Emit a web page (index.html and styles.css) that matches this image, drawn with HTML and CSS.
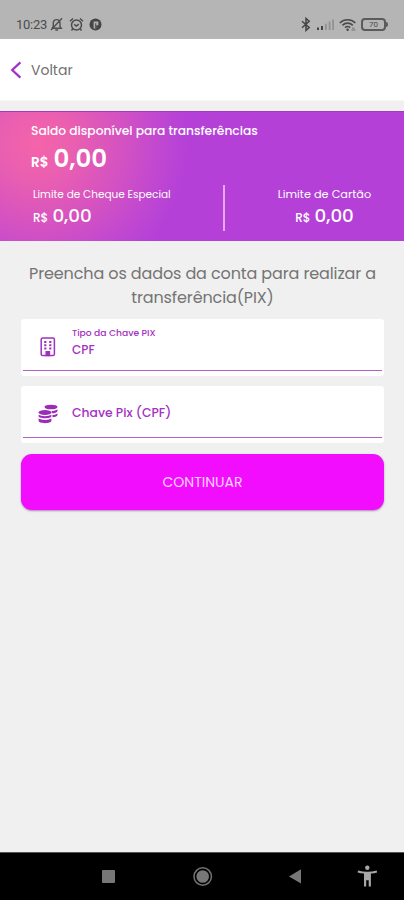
FILE: index.html
```html
<!DOCTYPE html>
<html lang="pt-BR">
<head>
<meta charset="utf-8">
<title>Transferência PIX</title>
<link rel="stylesheet" href="styles.css">
</head>
<body>
<div class="screen">
  <div class="status">
    <span class="clock">10:23</span>
    <svg class="s-icon bell" width="13" height="15" viewBox="0 0 13 15" fill="none" stroke="#505050" stroke-width="1.4"><path d="M2 11.2h9.2L10 9.5V6.2C10 4 8.7 2.6 6.6 2.6S3.3 4 3.3 6.2v3.3L2 11.2M5.3 13h2.8M12 1.2L1 13"/></svg>
    <svg class="s-icon alarm" width="15" height="15" viewBox="0 0 15 15" fill="none" stroke="#4c4c4c" stroke-width="1.5"><circle cx="7.5" cy="8" r="5"/><path d="M1 4.2L4 1.5M14 4.2L11 1.5M3.8 11.8L2.5 13.5M11.2 11.8l1.3 1.7M5.2 7.3l2.2 1.7 2.4-1.8"/></svg>
    <svg class="s-icon app" width="13" height="13" viewBox="0 0 13 13"><circle cx="6.5" cy="6.5" r="6" fill="#444"/><path d="M4.6 3.6h4.8v3.6H7.2v3.2H4.6z" fill="#b0b0b0"/><path d="M6.1 5.3h1.1v5.1H6.1z" fill="#555"/></svg>
    <span class="spacer"></span>
    <svg class="s-icon bt" width="10" height="15" viewBox="0 0 10 15" fill="none" stroke="#444" stroke-width="1.5"><path d="M1 4.2l7.2 6.3L5 13.4V1.5l3.2 2.8L1 10.7"/></svg>
    <svg class="s-icon signal" width="19" height="13" viewBox="0 0 19 13"><path d="M1 9.6h2V12H1zM5 8h2v4H5z" fill="#444"/><path d="M9 5.8h1.8V12H9zM12.7 3.6h1.8V12h-1.8zM16.2 1.5H18V12h-1.8z" fill="#929292"/></svg>
    <svg class="s-icon wifi" width="18" height="14" viewBox="0 0 18 14" fill="none" stroke="#4b4b4b" stroke-width="1.6"><path d="M.8 4.9C5.2.7 12 .7 16.4 4.9M3.4 7.3c3-2.9 7.4-2.9 10.4 0M6 9.6c1.6-1.4 3.6-1.4 5.2 0"/><circle cx="8.6" cy="11.8" r="1.2" fill="#444" stroke="none"/><path d="M12.5 12h4M13 10.2h2.5" stroke="#777" stroke-width="1"/></svg>
    <span class="battery">70</span>
  </div>
  <header class="topbar">
    <svg width="12" height="18" viewBox="0 0 12 18" fill="none" stroke="#a32fc6" stroke-width="2.2"><path d="M10.4 1.4L2.2 9l8.2 7.6"/></svg>
    <span class="back">Voltar</span>
  </header>
  <section class="balance">
    <div class="balance-label">Saldo disponível para transferências</div>
    <div class="money main"><small>R$</small><span>0,00</span></div>
    <div class="limits">
      <div class="limit check">
        <div class="limit-label">Limite de Cheque Especial</div>
        <div class="money"><small>R$</small><span>0,00</span></div>
      </div>
      <div class="limit card">
        <div class="limit-label">Limite de Cartão</div>
        <div class="money"><small>R$</small><span>0,00</span></div>
      </div>
    </div>
  </section>
  <main>
    <h1>Preencha os dados da conta para realizar a<br>transferência(PIX)</h1>
    <div class="field type">
      <svg class="f-icon" width="16" height="20" viewBox="0 0 16 20" fill="none" stroke="#a030bd" stroke-width="1.5"><rect x="1.2" y="1" width="13.2" height="17.6" rx="1.4"/><path d="M4.2 5h2.2M9.2 5h2.2M4.2 8.2h2.2M9.2 8.2h2.2M4.2 11.4h2.2M9.2 11.4h2.2" stroke-width="2"/><path d="M6.2 18.5v-3.7h3.2v3.7z" fill="#a030bd"/></svg>
      <div class="f-text"><span class="f-label">Tipo da Chave PIX</span><span class="f-value">CPF</span></div>
    </div>
    <div class="field key">
      <svg class="f-icon coins" width="20" height="20" viewBox="0 0 20 20" fill="#9b2cb8"><ellipse cx="13" cy="3" rx="6.5" ry="2.3"/><path d="M13.5 7.1c2.6 0 4.7-.7 6-1.8v1.8c0 1.2-2 2.1-5 2.3zM14.5 11c2.2-.1 4-.7 5-1.6v1.5c0 1.2-2 2.1-5 2.3z"/><ellipse cx="7" cy="8.5" rx="6.4" ry="2.4"/><path d="M.6 10.7c2.9 1.9 9.9 1.9 12.8 0v1.6c0 2.6-12.8 2.6-12.8 0zM.6 14.5c2.9 1.9 9.9 1.9 12.8 0v2.3c0 3.2-12.8 3.2-12.8 0z"/></svg>
      <span class="f-placeholder">Chave Pix (CPF)</span>
    </div>
    <button class="continue" type="button">CONTINUAR</button>
  </main>
  <nav class="navbar">
    <svg width="404" height="48" viewBox="0 0 404 48"><rect x="102" y="18" width="13" height="13" rx="1" fill="#777"/><circle cx="202.7" cy="24.5" r="8.7" fill="none" stroke="#737373" stroke-width="1.5"/><circle cx="202.7" cy="24.5" r="6.3" fill="#777"/><path d="M289 24.4L301 17.3v14.2z" fill="#777"/><g fill="#a8a8a8"><circle cx="367.3" cy="15.8" r="2.2"/><path d="M358 18.6c6 1.6 12.6 1.6 18.7 0l.4 1.8c-2 .6-4 1-6.2 1.2v13h-2.2v-6.4h-2.5v6.4H364v-13c-2.2-.2-4.3-.6-6.4-1.2z"/></g></svg>
  </nav>
</div>
</body>
</html>
```
FILE: styles.css
```css
* { box-sizing: border-box; }
body {
  margin: 0;
  background: #f0f0f0;
  font-family: Poppins, Inter, "Open Sans", sans-serif;
}
.screen { width: 404px; height: 900px; display: flex; flex-direction: column; overflow: hidden; }
.status {
  flex: none;
  height: 39px;
  padding: 10px 18px 0 16px;
  display: flex;
  align-items: center;
  background: #b5b5b5;
  color: #4c4c4c;
}
.clock { font: 13px/16px Roboto, sans-serif; letter-spacing: -.25px; width: 34px; white-space: nowrap; }
.s-icon { flex: none; }
.alarm { margin-left: 6px; }
.app { margin-left: 5px; }
.spacer { flex: 1; }
.signal { margin-left: 5px; }
.wifi { margin-left: 4px; }
.battery {
  position: relative;
  margin-left: 4px;
  width: 25px;
  height: 13px;
  border: 2px solid #5b5b5b;
  border-radius: 4px;
  font: 8px/9px Roboto, sans-serif;
  text-align: center;
}
.battery::after {
  content: "";
  position: absolute;
  right: -4px;
  top: 2px;
  width: 2px;
  height: 5px;
  border-radius: 0 2px 2px 0;
  background: #5b5b5b;
}
.topbar {
  flex: none;
  height: 62px;
  padding-left: 10px;
  display: flex;
  align-items: center;
  gap: 9px;
  background: #fff;
  border-bottom: 1px solid #f7f7f7;
}
.back { margin-top: 1px; font-size: 14px; color: #707070; }
.balance {
  flex: none;
  height: 130px;
  margin-top: 10px;
  padding: 11px 0 0 31px;
  color: #fff;
  background: radial-gradient(circle at 38px 32px, #f564aa 0, #ea5fb0 35px, #d653c0 80px, #c148d0 120px, #b440d8 150px);
  border-top: 1px solid #a43ac4;
}
.balance-label { font-size: 12.25px; line-height: 16px; font-weight: 500; white-space: nowrap; }
.money { display: flex; align-items: baseline; }
.money small { font-size: 12px; font-weight: 500; }
.money span { font-size: 18.3px; font-weight: 500; }
.main { margin-top: 5px; height: 30px; line-height: 30px; gap: 5px; }
.money.main small { font-size: 13.5px; font-weight: 600; }
.money.main span { font-size: 24.5px; font-weight: 600; }
.limits { margin-top: 11px; display: flex; height: 46px; }
.limit-label { margin-top: 1px; font-size: 10.5px; line-height: 17px; white-space: nowrap; }
.limit .money { gap: 4px; line-height: 25px; }
.check { width: 194px; padding-left: 2px; border-right: 2px solid #e6a9f0; }
.card { width: 179px; padding-left: 20px; display: flex; flex-direction: column; align-items: center; }
.card .limit-label { font-size: 11.3px; }
main { flex: 1; padding: 21px 20px 0 21px; }
h1 {
  margin: 0 0 9px;
  font-size: 16px;
  line-height: 24px;
  letter-spacing: -.12px;
  font-weight: 400;
  color: #747474;
  text-align: center;
  white-space: nowrap;
}
.field {
  height: 57px;
  display: flex;
  align-items: center;
  background: linear-gradient(#b060c9, #b060c9) 2px 51px / calc(100% - 4px) 1px no-repeat #fff;
  border-radius: 3px;
  color: #a530c2;
}
.f-icon { flex: none; margin: -1px 16px 0 19px; }
.coins { margin-left: 17px; margin-right: 14px; }
.f-text { display: flex; flex-direction: column; margin-top: -9px; }
.f-label { font-size: 9.2px; line-height: 14px; font-weight: 500; }
.f-value { font-size: 12px; line-height: 20px; font-weight: 500; }
.key { margin-top: 10px; }
.f-placeholder { font-size: 12.35px; line-height: 18px; font-weight: 500; margin-top: -4px; }
.continue {
  display: block;
  width: 363px;
  height: 56px;
  margin-top: 11px;
  padding: 0;
  border: 0;
  border-radius: 11px;
  background: #f20dff;
  color: #ffd5ff;
  font: inherit;
  font-size: 14px;
  box-shadow: 0 1px 2px rgba(80, 0, 100, .45);
}
.navbar { flex: none; height: 48px; background: #000; border-top: 1px solid #555; }
.navbar svg { display: block; margin-top: -1px; }
```
